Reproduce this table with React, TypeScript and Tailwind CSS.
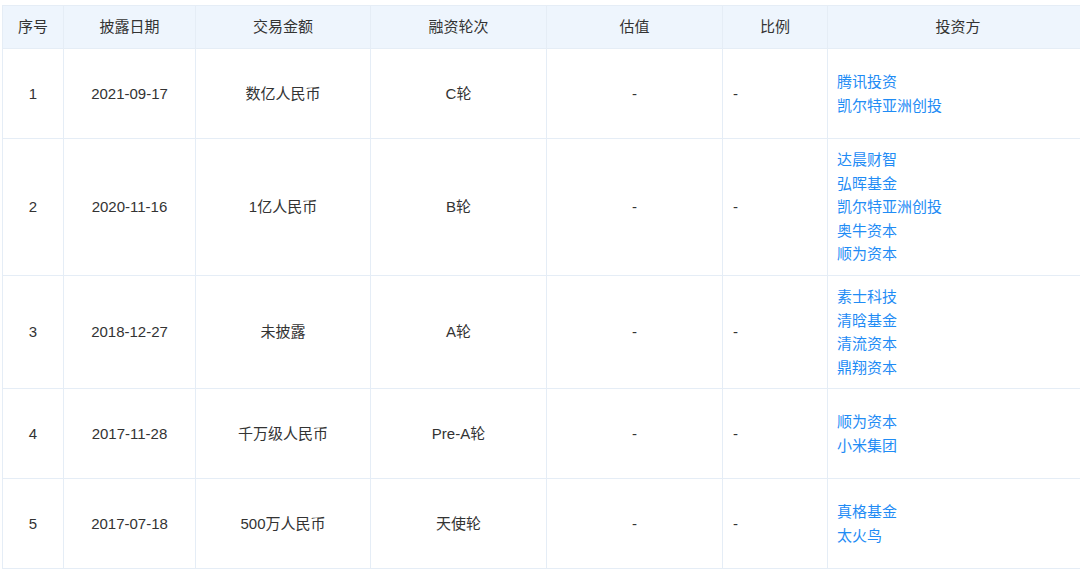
import React from "react";

const rows = [
  { n: "1", date: "2021-09-17", amt: "数亿人民币", round: "C轮", inv: ["腾讯投资", "凯尔特亚洲创投"] },
  { n: "2", date: "2020-11-16", amt: "1亿人民币", round: "B轮", inv: ["达晨财智", "弘晖基金", "凯尔特亚洲创投", "奥牛资本", "顺为资本"] },
  { n: "3", date: "2018-12-27", amt: "未披露", round: "A轮", inv: ["素士科技", "清晗基金", "清流资本", "鼎翔资本"] },
  { n: "4", date: "2017-11-28", amt: "千万级人民币", round: "Pre-A轮", inv: ["顺为资本", "小米集团"] },
  { n: "5", date: "2017-07-18", amt: "500万人民币", round: "天使轮", inv: ["真格基金", "太火鸟"] },
];

export default function App() {
  const td = "border border-[#e5edf6] align-middle";
  const th = "border border-[#e5edf6] font-normal text-center";
  return (
    <div
      className="w-[1080px] h-[578px] overflow-hidden bg-white pt-[5px] pl-[2px]"
      style={{ fontFamily: '"Liberation Sans", "Noto Sans CJK SC", sans-serif' }}
    >
      <table className="border-collapse table-fixed w-[1087px] text-[15px] leading-[23.6px] text-[#333]">
        <colgroup>
          <col className="w-[61px]" />
          <col className="w-[132px]" />
          <col className="w-[175px]" />
          <col className="w-[176px]" />
          <col className="w-[176px]" />
          <col className="w-[105px]" />
          <col />
        </colgroup>
        <thead>
          <tr className="bg-[#eef5fd] h-[43px] border-t border-t-[#e3e8ee]">
            <th className={th}>序号</th>
            <th className={th}>披露日期</th>
            <th className={th}>交易金额</th>
            <th className={th}>融资轮次</th>
            <th className={th}>估值</th>
            <th className={th}>比例</th>
            <th className={th}>投资方</th>
          </tr>
        </thead>
        <tbody>
          {rows.map((r) => (
            <tr key={r.n} className="h-[90px]">
              <td className={`${td} text-center`}>{r.n}</td>
              <td className={`${td} text-center`}>{r.date}</td>
              <td className={`${td} text-center`}>{r.amt}</td>
              <td className={`${td} text-center`}>{r.round}</td>
              <td className={`${td} text-center`}>-</td>
              <td className={`${td} text-left pl-[10px]`}>-</td>
              <td className={`${td} text-left pl-[9px] py-[9px]`}>
                {r.inv.map((i) => (
                  <div key={i} className="text-[#1f8cf5]">
                    {i}
                  </div>
                ))}
              </td>
            </tr>
          ))}
        </tbody>
      </table>
    </div>
  );
}
